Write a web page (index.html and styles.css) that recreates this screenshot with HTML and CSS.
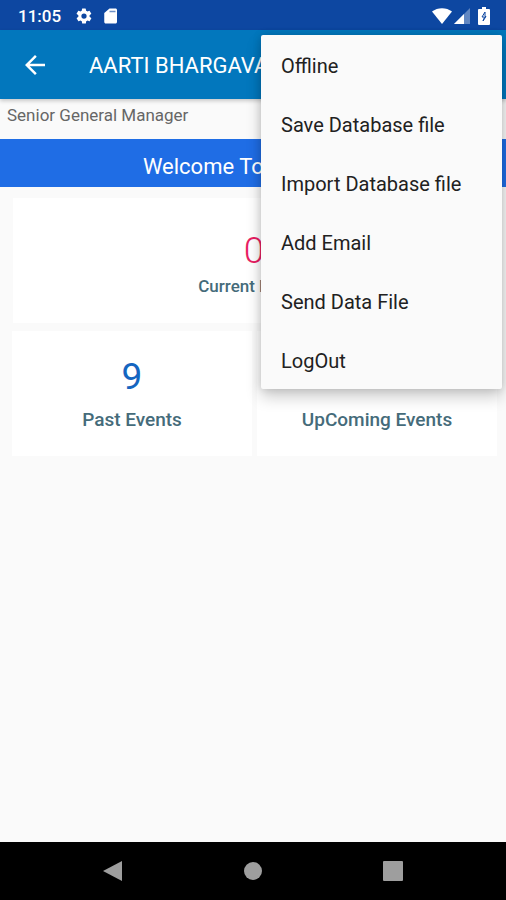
FILE: index.html
```html
<!DOCTYPE html>
<html lang="en">
<head>
    <meta charset="UTF-8">
    <meta name="viewport" content="width=device-width, initial-scale=1.0">
    <title>Events</title>
    <link rel="stylesheet" href="styles.css">
</head>
<body>
    <div class="statusbar">
        <span class="clock">11:05</span>
        <svg class="status-icon" viewBox="0 0 24 24"><path d="M19.4 13a7.500 7.500 0 0 0 0-2l2.100-1.600a.5.5 0 0 0 .1-.7l-2-3.400a.5.5 0 0 0-.6-.2l-2.500 1a7.300 7.300 0 0 0-1.700-1l-.4-2.600a.5.5 0 0 0-.5-.5h-4a.5.5 0 0 0-.5.4L9 5.100a7.700 7.700 0 0 0-1.700 1l-2.500-1a.5.5 0 0 0-.6.2l-2 3.400a.5.5 0 0 0 .1.700L4.500 11a7.900 7.900 0 0 0 0 2l-2.100 1.600a.5.5 0 0 0-.1.700l2 3.400c.1.200.4.300.6.200l2.500-1a7.300 7.300 0 0 0 1.700 1l.4 2.600c0 .3.200.5.500.5h4c.3 0 .5-.2.500-.4l.4-2.700a7.700 7.700 0 0 0 1.700-1l2.500 1c.2.100.5 0 .6-.2l2-3.400a.5.5 0 0 0-.1-.7zM12 15.500a3.500 3.500 0 1 1 0-7 3.500 3.500 0 0 1 0 7z" fill="#fff" fill-rule="evenodd"/></svg>
        <svg class="status-icon sd" viewBox="0 0 24 24"><path d="M18 2h-8L3 8v12c0 1.100.9 2 2 2h13c1.100 0 2-.9 2-2V4c0-1.100-.9-2-2-2z" fill="#fff"/><path d="M10 5h8v2h-8z" fill="#0d47a1" opacity=".6"/></svg>
        <span class="spacer"></span>
        <svg class="wifi" viewBox="0 0 20 16"><path d="M0 3.500C5.500-1 14.500-1 20 3.500L10 16z" fill="#fff"/></svg>
        <svg class="signal" viewBox="0 0 16 16"><path d="M16 0v16H0z" fill="#fff" opacity=".35"/><path d="M10 6v10H0z" fill="#fff"/></svg>
        <svg class="battery" viewBox="0 0 12 18"><path d="M4 0h4v2h3q1 0 1 1v14q0 1-1 1H1q-1 0-1-1V3q0-1 1-1h3z" fill="#fff"/><path d="M7 5L4 10h2.500L5 14M7 5v4.500h1L5 14" fill="none" stroke="#0d47a1" stroke-width="1"/></svg>
    </div>

    <header class="appbar">
        <button class="back" aria-label="Back">
            <svg viewBox="0 0 24 24"><path d="M20 11H7.800l5.600-5.600L12 4l-8 8 8 8 1.400-1.400L7.800 13H20z" fill="#fff"/></svg>
        </button>
        <h1>AARTI BHARGAVA</h1>
    </header>

    <main>
        <p class="designation">Senior General Manager</p>
        <h2 class="welcome">Welcome To Our Event</h2>
        <div class="cards">
            <a href="#" class="card current">
                <span class="count">0</span>
                <span class="label">Current Events</span>
            </a>
            <div class="row">
                <a href="#" class="card past">
                    <span class="count">9</span>
                    <span class="label">Past Events</span>
                </a>
                <a href="#" class="card upcoming">
                    <span class="count">0</span>
                    <span class="label">UpComing Events</span>
                </a>
            </div>
        </div>
    </main>

    <div class="menu">
        <button>Offline</button>
        <button>Save Database file</button>
        <button>Import Database file</button>
        <button>Add Email</button>
        <button>Send Data File</button>
        <button>LogOut</button>
    </div>

    <nav class="navbar">
        <button aria-label="Back"><svg viewBox="0 0 20 20"><path d="M19 0v20L0 10z" fill="#9e9e9e"/></svg></button>
        <button aria-label="Home"><svg viewBox="0 0 20 20"><circle cx="10" cy="10" r="9" fill="#9e9e9e"/></svg></button>
        <button aria-label="Recent apps"><svg viewBox="0 0 20 20"><rect width="20" height="20" rx="1" fill="#9e9e9e"/></svg></button>
    </nav>
</body>
</html>
```
FILE: styles.css
```css
* {
    box-sizing: border-box;
}
body {
    margin: 0;
    min-height: 100vh;
    display: flex;
    flex-direction: column;
    position: relative;
    overflow-x: hidden;
    background-color: #fafafa;
    font-family: Roboto, sans-serif;
}
button {
    border: 0;
    padding: 0;
    background: none;
    font-family: inherit;
    cursor: pointer;
}
svg {
    display: block;
}
h1, h2, p {
    margin: 0;
}

/* status bar */
.statusbar {
    display: flex;
    align-items: center;
    height: 30px;
    padding: 2px 16px 0 18px;
    background-color: #0d47a1;
    color: white;
}
.clock {
    margin-right: 14px;
    font-size: 17px;
    font-weight: 500;
}
.status-icon {
    width: 18px;
    height: 18px;
}
.sd {
    margin-left: 9px;
}
.spacer {
    flex: 1;
}
.wifi {
    width: 20px;
    height: 16px;
}
.signal {
    width: 16px;
    height: 16px;
    margin: 0 8px 0 2px;
}
.battery {
    width: 12px;
    height: 18px;
}

/* app bar */
.appbar {
    display: flex;
    align-items: center;
    height: 69px;
    padding-left: 20px;
    background-color: #0277bd;
    color: white;
    box-shadow: 0 2px 4px rgba(0, 0, 0, 0.2);
    z-index: 1;
}
.back svg {
    width: 30px;
    height: 30px;
}
.appbar h1 {
    margin-left: 39px;
    padding-top: 2px;
    font-size: 22px;
    font-weight: 400;
    white-space: nowrap;
}

main {
    flex: 1;
}
.designation {
    height: 40px;
    padding: 6px 7px;
    color: #666;
    font-size: 17px;
    line-height: 20px;
}
.welcome {
    height: 48px;
    background-color: #1f6de5;
    color: white;
    font-size: 22px;
    font-weight: 400;
    line-height: 56px;
    text-align: center;
}

/* event cards */
.cards {
    display: flex;
    flex-direction: column;
    gap: 8px;
    padding: 11px 9px 0 12px;
}
.row {
    display: grid;
    grid-template-columns: 1fr 1fr;
    gap: 5px;
}
.card {
    display: flex;
    flex-direction: column;
    align-items: center;
    height: 125px;
    padding-top: 24px;
    background-color: white;
    color: #1565c0;
    text-decoration: none;
}
.count {
    font-size: 37px;
    font-weight: 300;
    line-height: 44px;
}
.past .count {
    font-weight: 400;
}
.label {
    margin-top: 10px;
    color: #456b7a;
    font-size: 19px;
    font-weight: 500;
    line-height: 22px;
}
.current {
    margin: 0 2px 0 1px;
    padding-top: 31px;
}
.current .count {
    color: #e91e63;
}
.current .label {
    margin-top: 2px;
    font-size: 17px;
}

/* overflow menu */
.menu {
    position: absolute;
    top: 35px;
    right: 4px;
    z-index: 2;
    display: flex;
    flex-direction: column;
    width: 241px;
    border-radius: 2px;
    background-color: #fafafa;
    box-shadow: 0 8px 16px rgba(0, 0, 0, 0.2), 0 0 8px rgba(0, 0, 0, 0.15);
}
.menu button {
    height: 59px;
    padding: 2px 20px 0;
    color: #212121;
    font-size: 20px;
    text-align: left;
}

/* navigation bar */
.navbar {
    display: flex;
    align-items: center;
    justify-content: center;
    gap: 120px;
    height: 58px;
    background-color: black;
}
.navbar svg {
    width: 20px;
    height: 20px;
}
```
